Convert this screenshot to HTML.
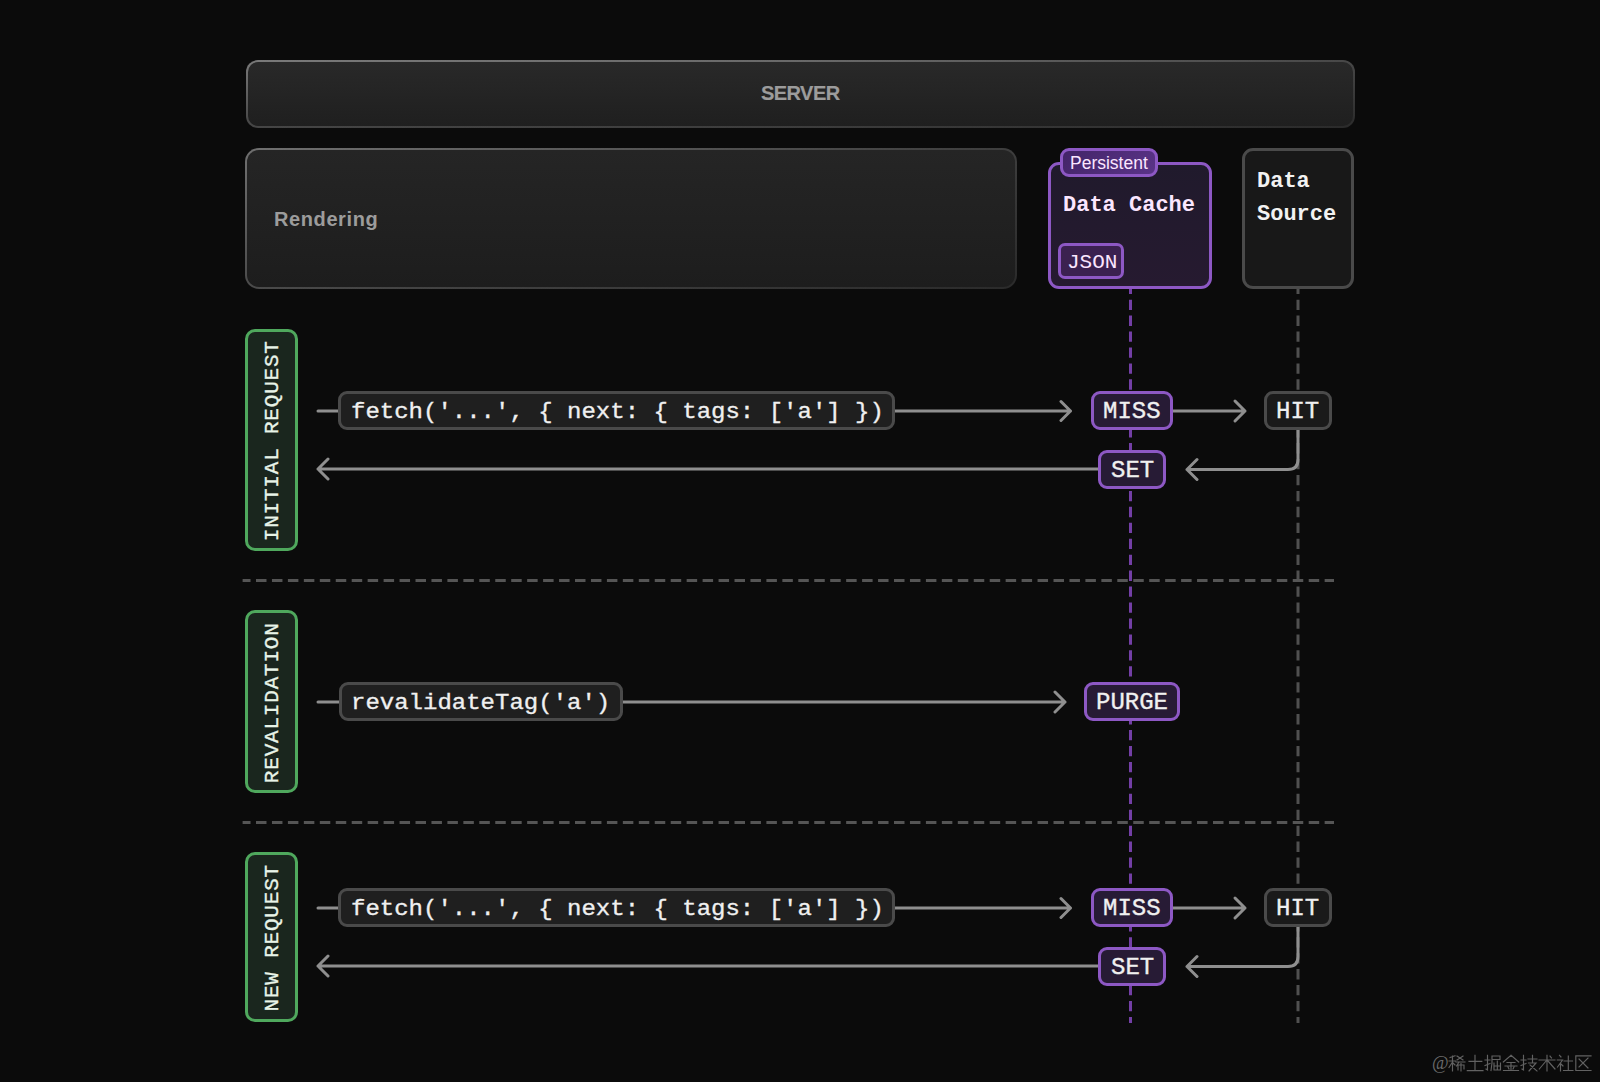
<!DOCTYPE html>
<html><head><meta charset="utf-8">
<style>
html,body{margin:0;padding:0;}
body{width:1600px;height:1082px;background:#0b0b0b;position:relative;overflow:hidden;font-family:"Liberation Sans",sans-serif;}
.a{position:absolute;box-sizing:border-box;}
.mono{font-family:"Liberation Mono",monospace;}
.srv{left:246px;top:60px;width:1109px;height:68px;border-radius:12px;padding:2px;background:linear-gradient(to right,rgba(11,11,11,0) 0%,rgba(11,11,11,0.15) 50%,rgba(11,11,11,0.45) 100%),linear-gradient(#7a7a7a,#444);}
.srv>div,.rend>div{width:100%;height:100%;border-radius:10px;background:linear-gradient(#292929,#1f1f1f);}
.rend{left:245px;top:148px;width:772px;height:141px;border-radius:14px;padding:2px;background:linear-gradient(to right,rgba(11,11,11,0) 0%,rgba(11,11,11,0.3) 60%,rgba(11,11,11,0.5) 100%),linear-gradient(#707070,#4a4a4a);}
.rend>div{border-radius:12px;background:linear-gradient(#252525,#1d1d1d);}
.gtxt{color:#9c9c9c;font-weight:bold;font-size:20px;line-height:20px;white-space:nowrap;}
.dc{left:1048px;top:162px;width:164px;height:127px;border-radius:11px;border:3px solid #8d58c4;background:linear-gradient(#201a2c,#261a30);}
.tag{border:3px solid #8d58c4;background:linear-gradient(135deg,#432468,#5a3488);border-radius:9px;}
.ds{left:1242px;top:148px;width:112px;height:141px;border-radius:11px;border:3px solid #4a4a4a;background:#181818;}
.wt{color:#f2f2f2;font-weight:bold;font-size:22px;line-height:22px;white-space:nowrap;}
.pt{color:#fbe6ff;}
.grn{left:245px;width:53px;border-radius:10px;border:3px solid #4fa85d;background:#1a261e;}
.vt{position:absolute;left:50%;top:50%;transform:translate(-50%,-50%) translate(0.75px,0.75px) rotate(-90deg);color:#e8f4e8;font-family:"Liberation Mono",monospace;font-size:21px;line-height:22px;letter-spacing:0.8px;white-space:nowrap;-webkit-text-stroke:0.35px currentColor;}
.pill{border-radius:9px;border:3px solid #4a4a4a;background:#1f1f1f;}
.ptxt{-webkit-text-stroke:0.35px currentColor;color:#f0f0f0;font-family:"Liberation Mono",monospace;font-size:24px;line-height:24px;white-space:nowrap;}
.code{transform:scaleY(0.92);transform-origin:0 18.3px;}
.pur{border-radius:9px;border:3px solid #8d58c4;background:#271b35;}
.hit{border-radius:9px;border:3px solid #4a4a4a;background:#1a1a1a;}
</style></head>
<body>
<!-- lines -->
<svg class="a" style="left:0;top:0" width="1600" height="1082" viewBox="0 0 1600 1082">
  <g stroke-width="3" fill="none">
    <line x1="1130.5" y1="283.7" x2="1130.5" y2="1023" stroke="#733fa6" stroke-dasharray="10.3 5.64" stroke-dashoffset="0"/>
    <line x1="1298" y1="283.7" x2="1298" y2="1023" stroke="#505050" stroke-dasharray="10.3 5.64" stroke-dashoffset="0"/>
    <line x1="242.6" y1="580.6" x2="1334" y2="580.6" stroke="#555" stroke-dasharray="10.5 5.45" stroke-dashoffset="2.55"/>
    <line x1="242.6" y1="822.5" x2="1334" y2="822.5" stroke="#555" stroke-dasharray="10.5 5.45" stroke-dashoffset="2.55"/>
  </g>
  <g stroke="#8f8f8f" stroke-width="3" fill="none" stroke-linecap="round" stroke-linejoin="round">
    <!-- row1 -->
    <line x1="318" y1="411" x2="340" y2="411"/>
    <path d="M894 411 H1070.5 M1061 401.5 L1070.5 411 L1061 420.5"/>
    <path d="M1172 411 H1245 M1235 401 L1245 411 L1235 421"/>
    <path d="M1298 430 V459.5 Q1298 469.5 1288 469.5 H1187 M1197 459.5 L1187 469.5 L1197 479.5"/>
    <path d="M1099 469 H318 M328 459 L318 469 L328 479"/>
    <!-- row2 -->
    <line x1="318" y1="702" x2="340" y2="702"/>
    <path d="M622 702 H1065 M1055 692 L1065 702 L1055 712"/>
    <!-- row3 -->
    <line x1="318" y1="908" x2="340" y2="908"/>
    <path d="M894 908 H1070.5 M1061 898.5 L1070.5 908 L1061 917.5"/>
    <path d="M1172 908 H1245 M1235 898 L1245 908 L1235 918"/>
    <path d="M1298 927 V956.5 Q1298 966.5 1288 966.5 H1187 M1197 956.5 L1187 966.5 L1197 976.5"/>
    <path d="M1099 966 H318 M328 956 L318 966 L328 976"/>
  </g>
</svg>

<div class="a srv"><div></div></div>
<div class="a gtxt" style="left:761px;top:83px;letter-spacing:-0.55px;-webkit-text-stroke:0.2px currentColor">SERVER</div>
<div class="a rend"><div></div></div>
<div class="a gtxt" style="left:274px;top:209px;letter-spacing:0.6px">Rendering</div>

<div class="a dc"></div>
<div class="a tag" style="left:1060px;top:148px;width:98px;height:29px"></div>
<div class="a pt" style="left:1070px;top:155px;font-size:17.5px;line-height:17px;white-space:nowrap">Persistent</div>
<div class="a wt mono pt" style="left:1063px;top:195px">Data Cache</div>
<div class="a tag" style="left:1058px;top:243px;width:66px;height:36px;border-radius:7px;background:#3b2150"></div>
<div class="a mono pt" style="left:1067px;top:252px;font-size:21px;line-height:21px">JSON</div>

<div class="a ds"></div>
<div class="a wt mono" style="left:1257px;top:171px">Data</div>
<div class="a wt mono" style="left:1257px;top:204px">Source</div>

<div class="a grn" style="top:329px;height:222px"><div class="vt">INITIAL REQUEST</div></div>
<div class="a grn" style="top:610px;height:183px"><div class="vt">REVALIDATION</div></div>
<div class="a grn" style="top:852px;height:170px"><div class="vt">NEW REQUEST</div></div>

<!-- row1 -->
<div class="a pill" style="left:338px;top:391px;width:557px;height:39px"></div>
<div class="a ptxt code" style="left:351px;top:400px">fetch('...', { next: { tags: ['a'] })</div>
<div class="a pur" style="left:1091px;top:391px;width:82px;height:39px"></div>
<div class="a ptxt pt" style="left:1103px;top:400px">MISS</div>
<div class="a hit" style="left:1264px;top:391px;width:68px;height:39px"></div>
<div class="a ptxt" style="left:1276px;top:400px">HIT</div>
<div class="a pur" style="left:1098px;top:450px;width:68px;height:39px"></div>
<div class="a ptxt pt" style="left:1111px;top:459px">SET</div>

<!-- row2 -->
<div class="a pill" style="left:339px;top:682px;width:284px;height:39px"></div>
<div class="a ptxt code" style="left:351px;top:691px">revalidateTag('a')</div>
<div class="a pur" style="left:1084px;top:682px;width:96px;height:39px"></div>
<div class="a ptxt pt" style="left:1096px;top:691px">PURGE</div>

<!-- row3 -->
<div class="a pill" style="left:338px;top:888px;width:557px;height:39px"></div>
<div class="a ptxt code" style="left:351px;top:897px">fetch('...', { next: { tags: ['a'] })</div>
<div class="a pur" style="left:1091px;top:888px;width:82px;height:39px"></div>
<div class="a ptxt pt" style="left:1103px;top:897px">MISS</div>
<div class="a hit" style="left:1264px;top:888px;width:68px;height:39px"></div>
<div class="a ptxt" style="left:1276px;top:897px">HIT</div>
<div class="a pur" style="left:1098px;top:947px;width:68px;height:39px"></div>
<div class="a ptxt pt" style="left:1111px;top:956px">SET</div>

<!-- watermark -->
<div class="a" style="left:1432px;top:1053px;font-family:'Liberation Serif',serif;font-size:18px;line-height:20px;color:#6a6a6a">@</div>
<svg class="a" style="left:0;top:0" width="1600" height="1082" viewBox="0 0 1600 1082">
 <g fill="none" stroke="#626262" stroke-width="1.15" stroke-linecap="square">
  <g transform="translate(1449,1055)"><path d="M1,2.5 L6,0.8 M0,6 H6.5 M3.5,1 V16 M3.5,7 L0,12.5 M3.5,7.5 L6,10 M8,1 L14,5 M14,1 L8,5 M7,7 H16 M10,7 L7.5,11 M9,10 V15 M9,10 H15 V14 M12,8.5 V16"/></g>
  <g transform="translate(1467,1055)"><path d="M2,6.3 H14.8 M8,0.3 V15.6 M0.3,15.6 H16"/></g>
  <g transform="translate(1485,1055)"><path d="M0,5 H5 M2.5,0.3 V15 L1,14 M0,10.5 L5,8.5 M7,1 H15 V4.5 H7 M7,1 V8 L6,15.5 M9,8 V15 H15.5 V8 M12.3,6 V15 M9,11 H15.5"/></g>
  <g transform="translate(1503,1055)"><path d="M8,0.3 L0.3,7 M8,0.3 L15.7,7 M4,7.5 H12 M2,11 H14 M8,7.5 V15.5 M0.5,15.5 H15.5 M5,12 L6,14 M11,12 L10,14"/></g>
  <g transform="translate(1521,1055)"><path d="M0,5 H5 M2.5,0.3 V15 L1,14 M0,10.5 L5,8.5 M7,4 H16 M11.5,0.3 V8 M7.5,8 H15 L8,16 M9,10 L16,16"/></g>
  <g transform="translate(1539,1055)"><path d="M0,5 H16 M8,0.3 V16 M7.5,5.5 L0.3,14 M8.5,5.5 L16,14 M11,1 L12.5,3"/></g>
  <g transform="translate(1557,1055)"><path d="M2.5,0.3 L4,2 M0.3,5 H5.5 L0.5,12 M3.5,8 V16 M4,9 L6,11 M7,6 H15.5 M11.3,1 V15.5 M6.5,15.5 H16"/></g>
  <g transform="translate(1575,1055)"><path d="M16,0.8 H0.8 V15.5 H16 M4,4 L13,13 M13,3 L4,12"/></g>
 </g>
</svg>
</body></html>
